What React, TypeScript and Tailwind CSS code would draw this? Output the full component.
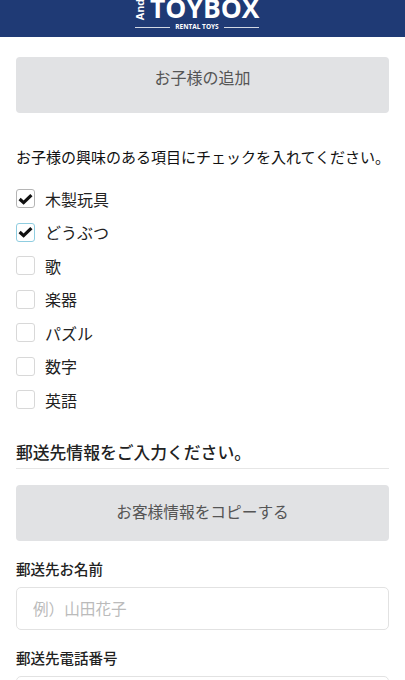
const font = "[font-family:'Noto_Sans_CJK_JP','Liberation_Sans',sans-serif]";

const interests = [
  { label: "木製玩具", checked: true },
  { label: "どうぶつ", checked: true, focused: true },
  { label: "歌" },
  { label: "楽器" },
  { label: "パズル" },
  { label: "数字" },
  { label: "英語" },
];

function Header() {
  return (
    <header className="h-[37px] overflow-hidden bg-[#1f3a75] flex justify-center">
      <div className="relative w-[125px] h-[37px] shrink-0 ml-[-6px]">
        <span className="absolute left-[-2px] top-[-1px] text-[11px] leading-none font-bold text-white [font-family:'Liberation_Sans',sans-serif] [writing-mode:vertical-rl] rotate-180">
          And
        </span>
        <span className="absolute left-[13px] top-[-4px] text-[26.5px] leading-[24px] font-bold text-white [font-family:'Open_Sans',sans-serif]">
          TOYBOX
        </span>
        <div className="absolute left-[-2px] top-[23px] w-[124px] flex items-center gap-[5px]">
          <div className="h-px flex-1 bg-white/80" />
          <span className="text-[6.5px] leading-[8px] font-bold text-white [font-family:'Open_Sans',sans-serif]">RENTAL TOYS</span>
          <div className="h-px flex-1 bg-white/80" />
        </div>
      </div>
    </header>
  );
}

function GrayButton({ children, className }: { children: string; className: string }) {
  return (
    <button className={"w-full h-[56px] rounded-[4px] bg-[#e1e2e4] text-[#555] " + className}>
      {children}
    </button>
  );
}

function Check({ label, checked, focused }: { label: string; checked?: boolean; focused?: boolean }) {
  return (
    <label className="flex items-center h-[33.5px]">
      <span
        className={
          "w-[19px] h-[19px] rounded-[3px] border bg-white flex items-center justify-center " +
          (focused ? "border-[#8fcde0]" : checked ? "border-[#b5b5b5]" : "border-[#d8d8d8]")
        }
      >
        {checked && (
          <svg width="15" height="12" viewBox="0 0 15 12" fill="none">
            <path d="M1.6 6 L5.6 9.6 L13.4 2.2" stroke="#111" strokeWidth="3.2" />
          </svg>
        )}
      </span>
      <span className="ml-[10px] text-[16px] text-[#222]">{label}</span>
    </label>
  );
}

export default function App() {
  return (
    <div className={"w-[405px] h-[680px] overflow-hidden bg-white " + font}>
      <Header />
      <main className="px-4 pt-5">
        <GrayButton className="text-[16px] pb-[17px]">お子様の追加</GrayButton>
        <p className="mt-[34px] text-[15px] leading-5 text-[#111] whitespace-nowrap">
          お子様の興味のある項目にチェックを入れてください。
        </p>
        <div className="mt-[15px]">
          {interests.map((item) => (
            <Check key={item.label} label={item.label} checked={item.checked} focused={item.focused} />
          ))}
        </div>
        <h2 className="mt-[23px] pb-[4px] text-[16.8px] leading-6 font-medium text-[#222] border-b border-[#e6e6e6]">
          郵送先情報をご入力ください。
        </h2>
        <div className="mt-4">
          <GrayButton className="text-[15.7px] pb-[1px]">お客様情報をコピーする</GrayButton>
        </div>
        <p className="mt-[18px] text-[14.5px] leading-5 font-medium text-[#222]">郵送先お名前</p>
        <input
          readOnly
          placeholder="例）山田花子"
          className="mt-[8px] block w-full h-[43px] rounded-[5px] border border-[#e2e2e2] px-4 text-[15.6px] placeholder:text-[#bbb]"
        />
        <p className="mt-[18px] text-[14.5px] leading-5 font-medium text-[#222]">郵送先電話番号</p>
        <div className="mt-[8px] h-[43px] rounded-[5px] border border-[#e2e2e2]" />
      </main>
    </div>
  );
}
